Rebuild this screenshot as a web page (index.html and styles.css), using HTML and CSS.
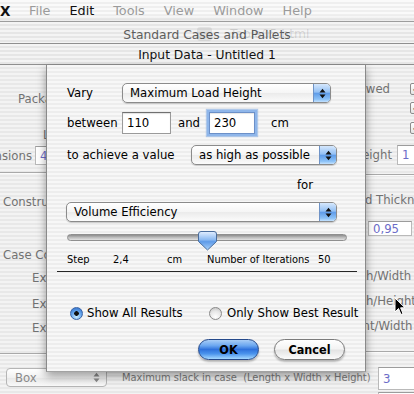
FILE: index.html
```html
<!DOCTYPE html>
<html>
<head>
<meta charset="utf-8">
<title>Input Data - Untitled 1</title>
<link rel="stylesheet" href="styles.css">
</head>
<body>
<div class="screen">
  <div class="menubar">
    <span class="app">X</span>
    <span class="menu">File</span>
    <span class="menu active">Edit</span>
    <span class="menu">Tools</span>
    <span class="menu">View</span>
    <span class="menu">Window</span>
    <span class="menu">Help</span>
  </div>
  <div class="titlebar back">
    <span class="ttl">Standard Cases and Pallets</span>
    <span class="ghost"><span class="ghost-icon"></span>Table05.html</span>
  </div>
  <div class="titlebar front"><span class="ttl">Input Data - Untitled 1</span></div>

  <div class="content">
    <div class="bg">
      <div class="bg-cols">
        <div class="bg-left">
          <div class="bl t-pack">Packaging Type</div>
          <div class="bl t-len">Length</div>
          <div class="bl-row t-dim">
            <span class="rlabel w32"><span>Outer Dimensions</span></span>
            <span class="bgfield wide">4</span>
          </div>
          <div class="hr hr1"></div>
          <div class="bl t-con">Construction</div>
          <div class="bl t-case">Case Construction</div>
          <div class="bl t-ext1">External Length</div>
          <div class="bl t-ext2">External Width</div>
          <div class="bl t-ext3">External Height</div>
          <div class="hr hr2"></div>
        </div>
        <div class="bg-right">
          <div class="br-row c1">
            <span class="rlabel w94"><span>Allowed</span></span>
            <span class="chk"><span class="tick">✓</span></span>
          </div>
          <div class="br-row c2"><span class="chk"><span class="tick">✓</span></span></div>
          <div class="br-row c3"><span class="chk"><span class="tick">✓</span></span></div>
          <div class="br-row c4">
            <span class="rlabel w96"><span>Height</span></span>
            <span class="bgfield hfield">1</span>
          </div>
          <div class="hr hr3"></div>
          <div class="bl r-board">Board Thickness</div>
          <span class="bgfield thick">0,95</span>
          <div class="bl r-lw">Length/Width Ratio</div>
          <div class="bl r-lh">Length/Height Ratio</div>
          <div class="bl r-fw">Front/Width Ratio</div>
          <div class="hr hr4"></div>
        </div>
      </div>
      <div class="bg-bottom">
        <div class="bgpopup"><span>Box</span>
          <svg class="garrows" width="7" height="11" viewBox="0 0 7 11"><path d="M0.5 4.5 L3.5 0.8 L6.5 4.5 Z M0.5 6.5 L3.5 10.2 L6.5 6.5 Z" fill="#8a8a8a"/></svg>
        </div>
        <span class="slack">Maximum slack in case&nbsp; (Length x Width x Height)</span>
        <span class="bgfield slackfield">3</span>
      </div>
      <div class="bg-last"><span class="bgfield lastfield"></span></div>
    </div>

    <div class="sheet">
      <div class="s-row r1">
        <span class="lbl w55">Vary</span>
        <div class="popup p1">
          <span class="ptext">Maximum Load Height</span>
          <span class="parrow"><svg width="7" height="11" viewBox="0 0 7 11"><path d="M0.5 4.5 L3.5 0.8 L6.5 4.5 Z M0.5 6.5 L3.5 10.2 L6.5 6.5 Z" fill="#111"/></svg></span>
        </div>
      </div>
      <div class="s-row r2">
        <span class="lbl w55">between</span>
        <span class="field">110</span>
        <span class="lbl and">and</span>
        <span class="field focus">230</span>
        <span class="lbl cm">cm</span>
      </div>
      <div class="s-row r3">
        <span class="lbl w124">to achieve a value</span>
        <div class="popup p2">
          <span class="ptext">as high as possible</span>
          <span class="parrow"><svg width="7" height="11" viewBox="0 0 7 11"><path d="M0.5 4.5 L3.5 0.8 L6.5 4.5 Z M0.5 6.5 L3.5 10.2 L6.5 6.5 Z" fill="#111"/></svg></span>
        </div>
      </div>
      <div class="s-row r4"><span class="lbl">for</span></div>
      <div class="s-row r5">
        <div class="popup p3">
          <span class="ptext">Volume Efficiency</span>
          <span class="parrow"><svg width="7" height="11" viewBox="0 0 7 11"><path d="M0.5 4.5 L3.5 0.8 L6.5 4.5 Z M0.5 6.5 L3.5 10.2 L6.5 6.5 Z" fill="#111"/></svg></span>
        </div>
      </div>
      <div class="slider">
        <div class="track"></div>
        <svg class="thumb" style="left:131px" width="19" height="20" viewBox="0 0 19 20">
          <defs>
            <linearGradient id="tg" x1="0" y1="0" x2="0" y2="1">
              <stop offset="0" stop-color="#e4efff"/>
              <stop offset="0.45" stop-color="#8ab9f2"/>
              <stop offset="0.55" stop-color="#5f9be8"/>
              <stop offset="1" stop-color="#a9d2fb"/>
            </linearGradient>
          </defs>
          <path d="M3 0.5 H16 Q18.5 0.5 18.5 3 V10.5 L9.5 19 L0.5 10.5 V3 Q0.5 0.5 3 0.5 Z" fill="url(#tg)" stroke="#4a6c9c" stroke-width="1"/>
        </svg>
      </div>
      <div class="steps">
        <span>Step</span>
        <span>2,4</span>
        <span>cm</span>
        <span>Number of Iterations</span>
        <span>50</span>
      </div>
      <div class="rule"></div>
      <div class="s-row radios">
        <div class="opt o1"><span class="radio on"></span><span class="lbl">Show All Results</span></div>
        <div class="opt o2"><span class="radio off"></span><span class="lbl">Only Show Best Result</span></div>
      </div>
      <div class="s-row buttons">
        <span class="btn default">OK</span>
        <span class="btn cancel">Cancel</span>
      </div>
    </div>
  </div>

  <svg class="cursor" width="12" height="19" viewBox="0 0 12 19">
    <path d="M1 1 L1 15 L4.5 11.5 L7 17.5 L9 16.6 L6.6 10.8 L11 10.8 Z" fill="#000" stroke="#fff" stroke-width="1"/>
  </svg>
</div>
</body>
</html>
```

FILE: styles.css
```css
* { box-sizing: border-box; }
body { margin: 0; background: #ececec; }

.screen {
  position: relative;
  width: 414px;
  height: 394px;
  overflow: hidden;
  font-family: "DejaVu Sans", "Noto Sans", sans-serif;
  font-size: 11.7px;
  color: #000;
  background: #ececec;
}

/* ---------- menu bar ---------- */
.menubar {
  height: 22px;
  border-bottom: 1px solid #9d9d9d;
  background:
    linear-gradient(rgba(255,255,255,0) 70%, rgba(0,0,0,0.06) 100%),
    repeating-linear-gradient(#fafafa 0 2px, #efefef 2px 4px);
  display: flex;
  align-items: center;
  gap: 19px;
  font-size: 12.8px;
  color: #9b9b9b;
  white-space: nowrap;
}
.menubar .app { font-weight: bold; color: #111; font-size: 13.5px; width: 10px; }
.menubar .active { color: #111; }

/* ---------- title bars ---------- */
.titlebar {
  position: relative;
  display: flex;
  justify-content: center;
  align-items: center;
  border-bottom: 1px solid #8f8f8f;
  background: repeating-linear-gradient(#f4f4f4 0 2px, #e6e6e6 2px 4px);
  font-size: 12.3px;
  white-space: nowrap;
}
.titlebar.back { height: 22px; padding-top: 4px; color: #5e5e5e; }
.titlebar.front { height: 21px; padding-top: 1px; color: #111; }
.ghost {
  position: absolute;
  left: 197px;
  top: 5px;
  color: rgba(0,0,0,0.12);
  display: flex;
  align-items: center;
  gap: 18px;
}
.ghost-icon {
  width: 15px; height: 14px;
  border-radius: 3px;
  background: rgba(0,0,0,0.07);
}

/* ---------- background window content ---------- */
.content {
  position: relative;
  height: 329px;
  background: repeating-linear-gradient(#f3f3f3 0 2px, #e8e8e8 2px 4px);
}
.bg { color: #727272; white-space: nowrap; }
.bg-cols { display: flex; height: 290px; }
.bg-left { display: flex; flex-direction: column; width: 170px; flex: none; }
.bg-right { display: flex; flex-direction: column; margin-left: auto; width: 118px; flex: none; }
.bl { height: 14px; line-height: 14px; }
.rlabel { display: flex; justify-content: flex-end; height: 100%; align-items: center; flex: none; }
.w32 { width: 32px; }
.w94 { width: 94px; }
.w96 { width: 96px; }

.t-pack { margin-top: 27px; margin-left: 18px; }
.t-len { margin-top: 22px; margin-left: 43px; }
.bl-row { display: flex; height: 20px; }
.t-dim { margin-top: 4px; }
.bgfield {
  display: flex;
  align-items: center;
  flex: none;
  background: #fff;
  border: 1px solid #b9b9b9;
  border-top-color: #9c9c9c;
  color: #6c6cc8;
  padding-left: 4px;
}
.bgfield.wide { margin-left: 3px; width: 70px; }
.hr { height: 2px; border-top: 1px solid #a9a9a9; border-bottom: 1px solid #fbfbfb; flex: none; }
.hr1 { margin-top: 7px; }
.t-con { margin-top: 21px; margin-left: 3px; }
.t-case { margin-top: 39px; margin-left: 3px; }
.t-ext1 { margin-top: 9px; margin-left: 32px; }
.t-ext2 { margin-top: 12px; margin-left: 32px; }
.t-ext3 { margin-top: 10px; margin-left: 32px; }
.hr2 { margin-top: 18px; }

.br-row { display: flex; height: 12px; flex: none; }
.c1 { margin-top: 18px; }
.c2 { margin-top: 7px; padding-left: 114px; }
.c3 { margin-top: 8px; padding-left: 114px; }
.c1 .chk { margin-left: 20px; }
.chk {
  width: 12px; height: 12px;
  border: 1px solid #8c8c8c;
  border-radius: 2px;
  background: linear-gradient(#ffffff, #e4e4e4);
  display: flex; align-items: center; justify-content: center;
  flex: none;
}
.tick { font-size: 10px; color: #777; line-height: 1; }
.c4 { margin-top: 11px; height: 20px; }
.hfield { margin-left: 5px; width: 40px; }
.hr3 { margin-top: 9px; }
.r-board { margin-top: 17px; margin-left: 42px; }
.thick { margin-top: 14px; margin-left: 72px; width: 44px; height: 15px; }
.r-lw { margin-top: 33px; margin-left: 37px; }
.r-lh { margin-top: 11px; margin-left: 37px; }
.r-fw { margin-top: 11px; margin-left: 49px; }
.hr4 { margin-top: 18px; }

.bg-bottom { display: flex; align-items: flex-start; height: 23px; margin-top: 12px; }
.bgpopup {
  margin-left: 6px; margin-top: 1px;
  width: 101px; height: 19px;
  flex: none;
  border: 1px solid #b5b5b5;
  border-radius: 4px;
  background: linear-gradient(#ffffff, #f1f1f1 50%, #e7e7e7 51%, #f9f9f9);
  display: flex; align-items: center;
  padding-left: 8px; padding-right: 6px;
  color: #8a8a8a;
}
.garrows { margin-left: auto; }
.slack { margin-left: 15px; width: 256px; flex: none; line-height: 22px; font-size: 9.9px; color: #7a7a7a; }
.slackfield { width: 50px; height: 23px; }
.bg-last { display: flex; padding-left: 378px; margin-top: 2px; }
.lastfield { width: 40px; height: 20px; }

/* ---------- sheet ---------- */
.sheet {
  position: absolute;
  left: 46px;
  top: 0;
  width: 320px;
  height: 307px;
  border-left: 1px solid #8a8a8a;
  border-right: 1px solid #8a8a8a;
  border-bottom: 1px solid #a2a2a2;
  background: repeating-linear-gradient(#f7f7f7 0 2px, #ededed 2px 4px);
  box-shadow: 0 4px 9px rgba(0,0,0,0.38);
  padding: 18px 0 0 20px;
  display: flex;
  flex-direction: column;
  white-space: nowrap;
}
.s-row { display: flex; align-items: center; flex: none; }
.lbl { line-height: 14px; }
.w55 { width: 55px; flex: none; }
.w124 { width: 124px; flex: none; }

.r1 { height: 20px; }
.r2 { height: 22px; margin-top: 9px; }
.r3 { height: 20px; margin-top: 11px; }
.r4 { height: 14px; margin-top: 13px; padding-left: 230px; }
.r5 { height: 20px; margin-top: 10px; margin-left: -1px; }

.popup {
  display: flex;
  align-items: center;
  flex: none;
  height: 20px;
  border: 1px solid #8b8b8b;
  border-radius: 5px;
  overflow: hidden;
  background: linear-gradient(#ffffff, #f5f5f5 50%, #ebebeb 52%, #fbfbfb);
  box-shadow: 0 1px 1px rgba(0,0,0,0.18);
}
.ptext { padding-left: 7px; }
.parrow {
  margin-left: auto;
  width: 17px;
  height: 100%;
  display: flex;
  align-items: center;
  justify-content: center;
  border-left: 1px solid #6f93c6;
  background: linear-gradient(#d6e8fd, #93c0f4 45%, #5f9ce9 52%, #8cc2f7 85%, #c4e2ff);
}
.p1 { width: 209px; }
.p2 { width: 146px; }
.p3 { width: 271px; }

.field {
  display: flex;
  align-items: center;
  flex: none;
  width: 49px;
  height: 22px;
  padding-left: 4px;
  background: #fff;
  border: 1px solid #9a9a9a;
  border-top-color: #707070;
  box-shadow: inset 0 1px 1px rgba(0,0,0,0.12);
}
.field.focus {
  width: 46px;
  margin-left: 2px;
  box-shadow: inset 0 1px 1px rgba(0,0,0,0.1), 0 0 0 2px #8fb6ea, 0 0 1px 3px rgba(120,165,225,0.55);
  border-color: #6c90c8;
}
.and { margin-left: 7px; width: 29px; flex: none; }
.cm { margin-left: 16px; }

.slider { position: relative; width: 280px; height: 19px; margin-top: 9px; flex: none; }
.track {
  margin-top: 3px;
  height: 7px;
  border-radius: 4px;
  border: 1px solid #8f8f8f;
  background: linear-gradient(#8d8d8d, #bdbdbd 50%, #e2e2e2);
}
.thumb { position: absolute; top: 0; }

.steps {
  display: grid;
  grid-template-columns: 46px 54px 40px 111px auto;
  height: 14px;
  line-height: 14px;
  margin-top: 3px;
  font-size: 9.9px;
  flex: none;
}
.rule { height: 1px; width: 300px; margin-left: -10px; margin-top: 4px; background: #262626; flex: none; }

.radios { height: 14px; margin-top: 34px; }
.opt { display: flex; align-items: center; }
.o1 { margin-left: 3px; width: 139px; flex: none; }
.radio {
  width: 13px; height: 13px;
  border-radius: 50%;
  flex: none;
  margin-right: 4px;
}
.radio.on {
  border: 1px solid #3a64a6;
  background:
    radial-gradient(circle at 50% 50%, #111 0 2px, rgba(0,0,0,0) 2.6px),
    radial-gradient(circle at 50% 80%, #c9ecff 0%, #5d9ee9 55%, #2c68c4 100%);
}
.radio.off {
  border: 1px solid #8a8a8a;
  background: radial-gradient(circle at 50% 80%, #ffffff 0%, #e6e6e6 55%, #bcbcbc 100%);
}
.o2 .radio { margin-right: 5px; }

.buttons { height: 21px; margin-top: 19px; padding-left: 131px; gap: 15px; }
.btn {
  display: flex;
  align-items: center;
  justify-content: center;
  flex: none;
  height: 21px;
  border-radius: 11px;
  font-family: "Liberation Sans Narrow", "DejaVu Sans Condensed", "DejaVu Sans", sans-serif;
  font-weight: bold;
  font-size: 12.5px;
  color: #000;
  box-shadow: 0 2px 2px rgba(0,0,0,0.25);
}
.btn.default {
  width: 61px;
  border: 1px solid #25498a;
  background: linear-gradient(#a9cdf6 0%, #6aa6f0 30%, #2f72dc 50%, #4a93ec 72%, #a4d8ff 100%);
}
.btn.cancel {
  width: 71px;
  border: 1px solid #7b7b7b;
  background: linear-gradient(#ffffff 0%, #f4f4f4 45%, #e4e4e4 55%, #fbfbfb 100%);
}

.cursor { position: absolute; left: 394px; top: 297px; }
```
